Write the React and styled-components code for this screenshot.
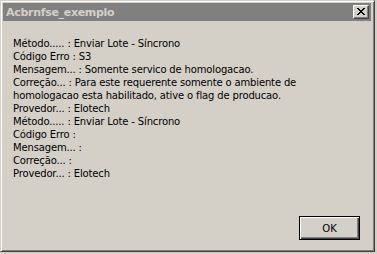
import React from 'react';
import styled, { createGlobalStyle } from 'styled-components';

const Global = createGlobalStyle`
  html, body {
    margin: 0;
    padding: 0;
    background: #d4d0c8;
  }
  #root {
    width: 377px;
    height: 254px;
  }
`;

const lines = [
  'Método..... : Enviar Lote - Síncrono',
  'Código Erro : S3',
  'Mensagem... : Somente servico de homologacao.',
  'Correção... : Para este requerente somente o ambiente de',
  'homologacao esta habilitado, ative o flag de producao.',
  'Provedor... : Elotech',
  'Método..... : Enviar Lote - Síncrono',
  'Código Erro :',
  'Mensagem... :',
  'Correção... :',
  'Provedor... : Elotech',
];

export default function App () {
  return (
    <>
      <Global />
      <Window>
        <TitleBar>
          <Title>Acbrnfse_exemplo</Title>
          <CloseButton>
            <svg width="8" height="7" viewBox="0 0 8 7" shapeRendering="crispEdges">
              <path d="M0 0h2v1H0zM6 0h2v1H6zM1 1h2v1H1zM5 1h2v1H5zM2 2h4v1H2zM3 3h2v1H3zM2 4h4v1H2zM1 5h2v1H1zM5 5h2v1H5zM0 6h2v1H0zM6 6h2v1H6z" fill="#000" />
            </svg>
          </CloseButton>
        </TitleBar>
        <Body>
          <Message>
            {lines.map((l, i) => <Line key={i}>{l}</Line>)}
          </Message>
          <Footer>
            <OkButton>OK</OkButton>
          </Footer>
        </Body>
      </Window>
    </>
  );
}

const Window = styled.div`
  box-sizing: border-box;
  width: 375px;
  height: 252px;
  background: #d4d0c8;
  border: 1px solid;
  border-color: #d4d0c8 #404040 #404040 #d4d0c8;
  box-shadow: inset 1px 1px #fff, inset -1px -1px #808080;
  padding: 2px 3px 3px 2px;
  display: flex;
  flex-direction: column;
  font-family: "DejaVu Sans", Verdana, sans-serif;
`;

const TitleBar = styled.div`
  height: 18px;
  background: #808080;
  display: flex;
  align-items: center;
  justify-content: space-between;
  padding: 0 2px 0 3px;
`;

const Title = styled.span`
  color: #d4d0c8;
  font-family: "DejaVu Sans", Verdana, sans-serif;
  font-weight: bold;
  font-size: 11px;
  letter-spacing: -0.3px;
`;

const CloseButton = styled.div`
  box-sizing: border-box;
  width: 16px;
  height: 14px;
  background: #d4d0c8;
  border: 1px solid;
  border-color: #fff #404040 #404040 #fff;
  box-shadow: inset -1px -1px #808080;
  display: flex;
  align-items: center;
  justify-content: center;
  padding-bottom: 1px;
`;

const Body = styled.div`
  flex: 1;
  display: flex;
  flex-direction: column;
  padding: 16px 11px 8px 10px;
`;

const Message = styled.div`
  display: flex;
  flex-direction: column;
`;

const Line = styled.div`
  font-family: "DejaVu Sans", Verdana, sans-serif;
  font-size: 10px;
  line-height: 13px;
  height: 13px;
  letter-spacing: -0.15px;
  color: #000;
  white-space: nowrap;
`;

const Footer = styled.div`
  margin-top: auto;
  display: flex;
  justify-content: flex-end;
`;

const OkButton = styled.button`
  box-sizing: border-box;
  width: 61px;
  height: 24px;
  padding: 0;
  background: #d4d0c8;
  border: 1px solid #000;
  box-shadow: inset 1px 1px #fff, inset -1px -1px #404040, inset -2px -2px #808080;
  font-family: "DejaVu Sans", Verdana, sans-serif;
  font-size: 10px;
  color: #000;
`;
